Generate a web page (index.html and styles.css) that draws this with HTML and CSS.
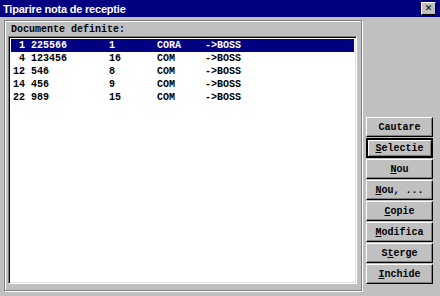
FILE: index.html
```html
<!DOCTYPE html>
<html>
<head>
	<title>Tiparire nota de receptie</title>
	<link rel="stylesheet" href="styles.css">
</head>
<body>
	<div class="window">
		<div class="titlebar">
			<span class="title">Tiparire nota de receptie</span>
			<span class="close">&#x2715;</span>
		</div>
		<div class="content">
			<div class="group">
				<div class="group-label">Documente definite:</div>
				<div class="list">
					<div class="row selected"><span class="no">1</span><span class="doc">225566</span><span class="qty">1</span><span class="type">CORA</span><span class="dest">-&gt;BOSS</span></div>
					<div class="row"><span class="no">4</span><span class="doc">123456</span><span class="qty">16</span><span class="type">COM</span><span class="dest">-&gt;BOSS</span></div>
					<div class="row"><span class="no">12</span><span class="doc">546</span><span class="qty">8</span><span class="type">COM</span><span class="dest">-&gt;BOSS</span></div>
					<div class="row"><span class="no">14</span><span class="doc">456</span><span class="qty">9</span><span class="type">COM</span><span class="dest">-&gt;BOSS</span></div>
					<div class="row"><span class="no">22</span><span class="doc">989</span><span class="qty">15</span><span class="type">COM</span><span class="dest">-&gt;BOSS</span></div>
				</div>
			</div>
			<div class="side">
				<button class="btn">Cautare</button>
				<button class="btn default"><u>S</u>electie</button>
				<button class="btn"><u>N</u>ou</button>
				<button class="btn"><u>N</u>ou, ...</button>
				<button class="btn"><u>C</u>opie</button>
				<button class="btn"><u>M</u>odifica</button>
				<button class="btn">S<u>t</u>erge</button>
				<button class="btn"><u>I</u>nchide</button>
			</div>
		</div>
	</div>
</body>
</html>
```

FILE: styles.css
```css
body{
	margin: 0;
	background-color: #c0c0c0;
}
.window{
	width: 440px;
	height: 296px;
	background-color: #c0c0c0;
	display: flex;
	flex-direction: column;
	overflow: hidden;
}
.titlebar{
	height: 17px;
	background-color: #000080;
	display: flex;
	align-items: center;
	justify-content: space-between;
	padding: 0 4px 0 3px;
}
.title{
	color: white;
	font-family: "Liberation Sans", Arial, sans-serif;
	font-weight: bold;
	font-size: 11px;
	letter-spacing: -0.2px;
}
.close{
	width: 13px;
	height: 11px;
	background-color: #c0c0c0;
	border-top: 1px solid #fff;
	border-left: 1px solid #fff;
	border-right: 1px solid #000;
	border-bottom: 1px solid #000;
	font-family: "DejaVu Sans", sans-serif;
	font-size: 9px;
	font-weight: bold;
	line-height: 11px;
	text-align: center;
	color: black;
}
.content{
	flex: 1;
	display: flex;
	padding: 3px 0 5px 4px;
}
.group{
	width: 349px;
	border: 1px solid #808080;
	box-shadow: 1px 1px 0 #fff, inset 1px 1px 0 #fff;
	padding: 3px 4px 6px 3px;
	display: flex;
	flex-direction: column;
}
.group-label{
	font-family: "Liberation Mono", "Courier New", monospace;
	font-weight: bold;
	font-size: 10px;
	line-height: 12px;
	padding-left: 3px;
	height: 12px;
}
.list{
	flex: 1;
	background-color: white;
	border-top: 1px solid #808080;
	border-left: 1px solid #808080;
	border-right: 1px solid #fff;
	border-bottom: 1px solid #fff;
	box-shadow: inset 1px 1px 0 #000, inset -1px -1px 0 #dfdfdf;
	padding: 2px 2px 0 2px;
}
.row{
	display: flex;
	height: 13px;
	line-height: 13px;
	padding-left: 2px;
	font-family: "Liberation Mono", "Courier New", monospace;
	font-weight: bold;
	font-size: 10px;
	color: black;
	white-space: pre;
}
.row.selected{
	background-color: #000080;
	color: white;
}
.no{
	width: 12px;
	text-align: right;
}
.doc{
	margin-left: 6px;
	width: 78px;
}
.qty, .type{
	width: 48px;
}
.side{
	flex: 1;
	display: flex;
	flex-direction: column;
	justify-content: flex-end;
	padding: 0 0 7px 4px;
}
.btn{
	width: 67px;
	height: 20px;
	margin-top: 1px;
	padding: 0;
	background-color: #c0c0c0;
	border-top: 1px solid #fff;
	border-left: 1px solid #fff;
	border-right: 1px solid #000;
	border-bottom: 1px solid #000;
	box-shadow: inset -1px -1px 0 #808080;
	font-family: "Liberation Mono", "Courier New", monospace;
	font-weight: bold;
	font-size: 10px;
	color: black;
}
.btn.default{
	border: 2px solid #000;
	box-shadow: inset 1px 1px 0 #fff, inset -1px -1px 0 #808080;
}
```
